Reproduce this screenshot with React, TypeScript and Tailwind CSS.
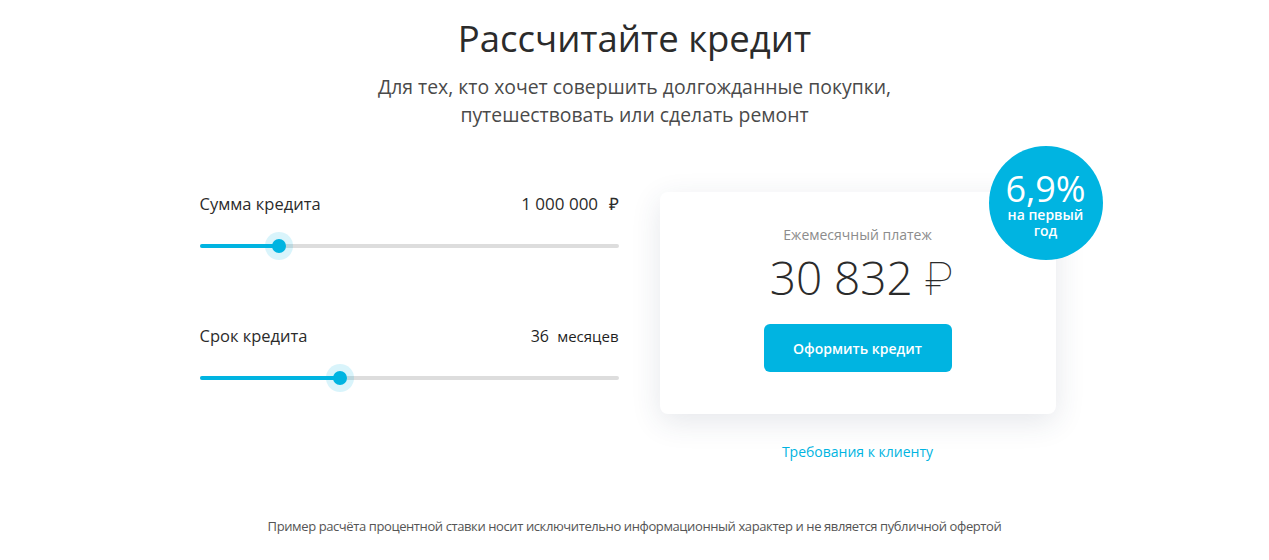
import React from "react";

// слайдер с подсветкой ползунка
const Slider = ({ percent }: { percent: number }) => (
  <div className="relative h-[4px] w-full rounded-full bg-[#dddddd]">
    <div className="absolute left-0 top-0 h-[4px] rounded-full bg-[#00b4e1]" style={{ width: `${percent}%` }} />
    <div
      className="absolute top-1/2 h-[28px] w-[28px] -translate-x-1/2 -translate-y-1/2 rounded-full bg-[#00b4e1]/15"
      style={{ left: `${percent}%` }}
    >
      <div className="absolute left-1/2 top-1/2 h-[14px] w-[14px] -translate-x-1/2 -translate-y-1/2 rounded-full bg-[#00b4e1]" />
    </div>
  </div>
);

export default function App() {
  return (
    <div className="min-h-[560px] bg-white font-['Open_Sans',sans-serif] text-[#333333]">
      <div className="pt-[13px] text-center">
        <h1 className="text-[36.5px] leading-[50px] text-[#2b2b2b]">Рассчитайте кредит</h1>
        <p className="mt-[10px] text-[19.4px] leading-[28px] text-[#4a4a4a]">
          Для тех, кто хочет совершить долгожданные покупки,
          <br />
          путешествовать или сделать ремонт
        </p>
      </div>

      <div className="mx-auto mt-[63px] flex w-[870px] gap-[41px]">
        {/* левая колонка */}
        <div className="w-[419px]">
          <div className="flex items-center justify-between text-[16.5px] leading-[24px]">
            <span className="text-[#2b2b2b]">Сумма кредита</span>
            <span className="text-[17px] text-[#2b2b2b]">
              1 000 000 <span className="ml-[6px]">₽</span>
            </span>
          </div>
          <div className="mt-[28px]">
            <Slider percent={19} />
          </div>

          <div className="mt-[76px] flex items-center justify-between text-[16.5px] leading-[24px]">
            <span className="text-[#2b2b2b]">Срок кредита</span>
            <span className="text-[16px] text-[#1f1f1f]">
              36 <span className="ml-[4px] text-[15px]">месяцев</span>
            </span>
          </div>
          <div className="mt-[28px]">
            <Slider percent={33.5} />
          </div>
        </div>

        {/* правая колонка */}
        <div className="flex w-[396px] flex-col items-center">
          <div className="relative w-[396px] rounded-[8px] bg-white px-6 pb-[42px] pt-[33px] text-center shadow-[0_8px_30px_rgba(40,60,90,0.12)]">
            <div className="text-[14px] leading-[20px] text-[#8c8c8c]">Ежемесячный платеж</div>
            <div className="mt-[4px] pl-[8px] text-[46px] font-light leading-[56px] text-[#2b2b2b]">
              30 832 <span className="font-['Roboto',sans-serif] font-thin">₽</span>
            </div>
            <button className="mx-auto mt-[17px] block h-[48px] w-[188px] rounded-[6px] bg-[#00b4e1] text-[14px] font-semibold text-white">
              Оформить кредит
            </button>
            <div className="absolute -right-[47px] -top-[46px] flex h-[114px] w-[114px] flex-col items-center justify-center rounded-full bg-[#00b4e1] text-white">
              <div className="mt-[4px] text-[36px] leading-[36px]">6,9%</div>
              <div className="text-[14px] font-semibold leading-[16px]">
                на первый
                <br />
                год
              </div>
            </div>
          </div>
          <a className="mt-[27px] text-[14px] leading-[22px] text-[#00b4e1]">Требования к клиенту</a>
        </div>
      </div>

      <p className="mt-[53px] text-center text-[13px] leading-[20px] tracking-[-0.4px] text-[#555555]">
        Пример расчёта процентной ставки носит исключительно информационный характер и не является публичной офертой
      </p>
    </div>
  );
}
